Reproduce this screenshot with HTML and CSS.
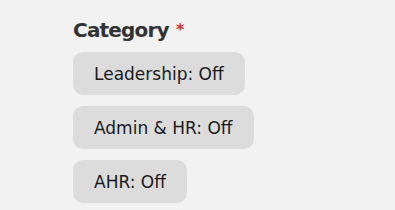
FILE: index.html
```html
<!DOCTYPE html>
<html>
<head>
<meta charset="utf-8">
<link rel="stylesheet" href="styles.css">
</head>
<body>
<div class="field">
  <div class="label">Category <span class="req">*</span></div>
  <div class="options">
    <button class="pill">Leadership: Off</button>
    <button class="pill">Admin &amp; HR: Off</button>
    <button class="pill">AHR: Off</button>
  </div>
</div>
</body>
</html>
```
FILE: styles.css
```css
html, body {
  margin: 0;
  background: #f2f2f2;
}
body {
  font-family: "DejaVu Sans", sans-serif;
}
.field {
  padding: 18px 0 0 73px;
}
.label {
  font-size: 20px;
  font-weight: bold;
  color: #333333;
  line-height: 24px;
  margin-bottom: 10px;
  letter-spacing: -0.8px;
}
.req {
  color: #d0312d;
  font-size: 16px;
  vertical-align: top;
  margin-left: 1px;
}
.options {
  display: flex;
  flex-direction: column;
  align-items: flex-start;
  gap: 11px;
}
.pill {
  font-family: inherit;
  font-size: 17px;
  color: #1a1a1a;
  background: #dcdcdc;
  border: none;
  border-radius: 10px;
  height: 43px;
  padding: 0 21px 0 21px;
}
```
